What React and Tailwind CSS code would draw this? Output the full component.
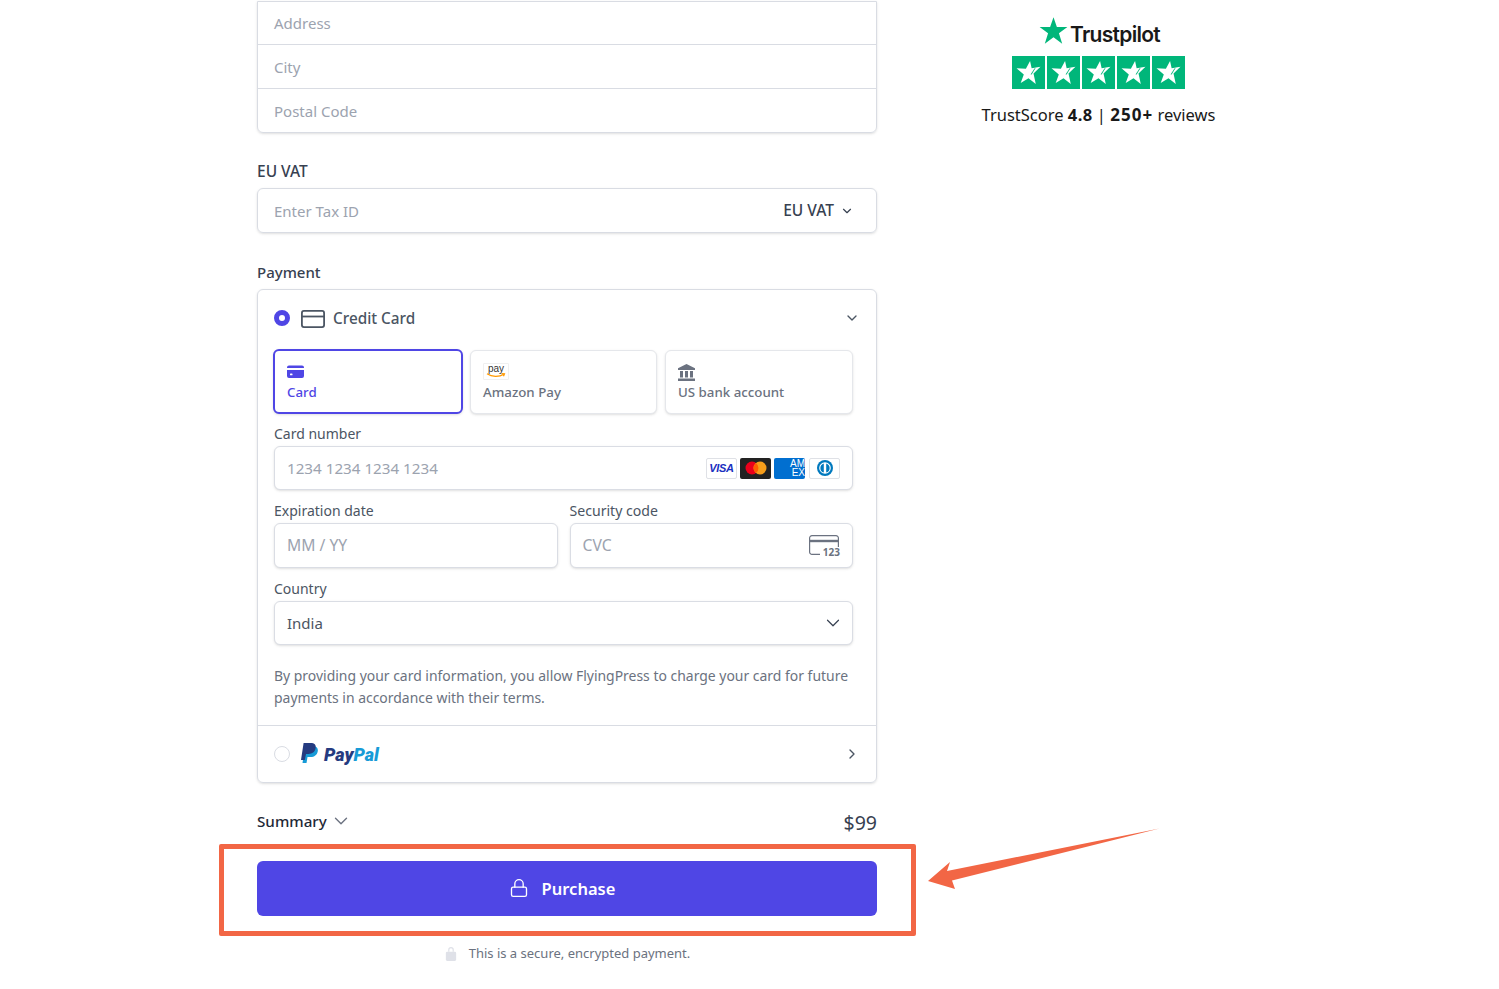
import { ChevronDown, ChevronRight, Lock } from "lucide-react";

const font = { fontFamily: '"Noto Sans", sans-serif' };

const Star = ({ className }) => (
  <svg viewBox="0 0 24 24" className={className}>
    <polygon points="12,1 14.8,9 23.5,9 16.5,14.2 19.2,23 12,17.6 4.8,23 7.5,14.2 0.5,9 9.2,9" fill="currentColor" />
  </svg>
);

const TileStar = () => (
  <svg viewBox="0 0 24 24" className="w-[25px] h-[25px]">
    <polygon points="13.500,1 15,8 23.500,6.500 16.800,13 19,23 12,17.500 4.500,22 7.500,14 0.500,8 9.500,8.500" fill="white" />
    <polygon points="17.500,8.500 19,7.500 15,14 14,14" fill="#00b67a" />
  </svg>
);

const Trustpilot = () => (
  <div className="flex flex-col items-center w-[240px]">
    <div className="flex items-center h-[30px] mt-[15px] ml-[1px]">
      <Star className="w-[29px] h-[29px] text-[#00b67a]" />
      <span className="text-[21px] font-semibold tracking-[-0.7px] text-[#191919] ml-[2px] mt-[9px] font-['Inter']">Trustpilot</span>
    </div>
    <div className="flex gap-[2.5px] mt-[11px] -ml-px">
      {[1, 2, 3, 4, 5].map((i) => (
        <div key={i} className="w-[32.5px] h-[33px] bg-[#00b67a] flex items-center justify-center">
          <TileStar />
        </div>
      ))}
    </div>
    <div className="mt-[13px] text-[16.500px] leading-[26px] text-[#191919] whitespace-nowrap -ml-px">
      TrustScore <b className="font-bold tracking-[0.4px]">4.8</b> | <b className="font-bold text-[17px] tracking-[1px]">250+</b> reviews
    </div>
  </div>
);

const TextRow = ({ label, border, className = "h-[44px] pt-px" }) => (
  <div className={`flex items-center px-4 text-[15px] text-[#9ca3af] ${className} ${border ? "border-t border-[#d9dce3]" : ""}`}>
    {label}
  </div>
);

const Tab = ({ active, icon, label, className }) => (
  <div
    className={`flex flex-col pl-3 bg-white shadow-sm ${className} ${
      active
        ? "h-[65px] -mt-px border-2 border-[#4f46e5] rounded-md text-[#4f46e5] pt-[10px]"
        : "h-[64px] border border-[#e5e7eb] rounded-md text-[#6b7280] pt-[11px]"
    }`}
  >
    <div className="h-[20px] flex items-center">{icon}</div>
    <div className={`text-[13.3px] leading-[20px] font-medium ${active ? "mt-[1px]" : ""}`}>{label}</div>
  </div>
);

const Field = ({ children, className = "" }) => (
  <div className={`h-[44px] border border-[#dadde4] rounded-md shadow-sm flex items-center justify-between pl-3 pr-3 text-[15.2px] bg-white ${className}`}>
    {children}
  </div>
);

const CardBrands = () => (
  <div className="flex gap-[3px]">
    <div className="w-[31px] h-[21px] bg-white border border-[#dfe1e6] rounded-[2px] flex items-center justify-center text-[11px] font-extrabold italic text-[#1a2fc0] font-['Liberation_Sans'] tracking-[-0.3px]">
      VISA
    </div>
    <div className="w-[31px] h-[21px] bg-[#222222] rounded-[2px] flex items-center justify-center">
      <svg viewBox="0 0 22 14" className="w-[22px] h-[14px]">
        <circle cx="7" cy="7" r="6.500" fill="#eb001b" />
        <circle cx="15" cy="7" r="6.500" fill="#f79e1b" />
        <path d="M11 1.900a6.500 6.500 0 0 1 0 10.200a6.500 6.500 0 0 1 0-10.200z" fill="#ff5f00" />
      </svg>
    </div>
    <div className="w-[31px] h-[21px] bg-[#016fd0] rounded-[2px] flex flex-col items-end justify-center overflow-hidden text-white text-[10px] leading-[9px] font-['Liberation_Sans']">
      <span>AM</span>
      <span>EX</span>
    </div>
    <div className="w-[31px] h-[21px] ml-px bg-white border border-[#dfe1e6] rounded-[2px] flex items-center justify-center">
      <svg viewBox="0 0 20 16" className="w-[20px] h-[16px]">
        <circle cx="10" cy="8" r="8" fill="#0079be" />
        <circle cx="10" cy="8" r="5.800" fill="white" />
        <path d="M8.800 3.400v9.200a4.800 4.800 0 0 1 0-9.200zM11.200 3.400a4.800 4.800 0 0 1 0 9.200z" fill="#0079be" />
      </svg>
    </div>
  </div>
);

export default function App() {
  return (
    <div style={font} className="relative w-[1499px] h-[989px] overflow-hidden bg-white flex">
      <div className="w-[620px] ml-[257px] shrink-0 pt-[1px]">
        {/* Address */}
        <div className="border border-[#d9dce3] rounded-b-md shadow-sm h-[132px]">
          <TextRow label="Address" className="h-[42px]" />
          <TextRow label="City" border />
          <TextRow label="Postal Code" border />
        </div>

        {/* VAT */}
        <div className="mt-[26px] text-[15.5px] leading-[24px] font-medium text-[#374151]">EU VAT</div>
        <div className="mt-[5px] h-[45px] border border-[#d9dce3] rounded-md shadow-sm flex items-center justify-between pl-4 pr-[22px]">
          <span className="text-[15px] text-[#9ca3af] mt-px">Enter Tax ID</span>
          <span className="flex items-center gap-[6px] text-[15.500px] font-medium text-[#374151]">
            EU VAT <ChevronDown size={14} strokeWidth={2} />
          </span>
        </div>

        {/* Payment */}
        <div className="mt-[27px] text-[15px] leading-[24px] font-medium text-[#374151]">Payment</div>
        <div className="mt-[5px] border border-[#d9dce3] rounded-md shadow-sm h-[494px]">
          <div className="h-[57px] flex items-center pl-4 pr-[16px]">
            <div className="w-4 h-4 rounded-full border-[5px] border-[#4f46e5] bg-white -mt-px" />
            <svg viewBox="0 0 24 18" className="w-[24px] h-[18px] ml-[11px] text-[#4b5563]" fill="none" stroke="currentColor" strokeWidth="1.8">
              <rect x="0.9" y="0.9" width="22.2" height="16.2" rx="2" />
              <path d="M1 6.500h22" />
            </svg>
            <span className="ml-2 text-[15.300px] font-medium text-[#4b5563]">Credit Card</span>
            <ChevronDown size={16} strokeWidth={2} className="ml-auto text-[#4b5563] -mt-px" />
          </div>

          <div className="pl-4 pr-[23px] mt-[3px]">
            <div className="flex items-start">
              <Tab
                active
                className="w-[190px] -ml-px"
                label="Card"
                icon={
                  <svg viewBox="0 0 17 13" className="w-[17px] h-[13px]">
                    <path d="M0 2.500a2 2 0 0 1 2-2h13a2 2 0 0 1 2 2v.5H0zM0 5h17v6a2 2 0 0 1-2 2H2a2 2 0 0 1-2-2z" fill="#4f46e5" />
                    <rect x="3" y="8.500" width="2.500" height="1.800" rx="0.6" fill="white" />
                  </svg>
                }
              />
              <Tab
                className="w-[187px] ml-[7px]"
                label="Amazon Pay"
                icon={
                  <div className="w-[26px] h-[17px] -mt-[1px] border border-[#f0f0f0] rounded-[1px] flex flex-col items-center relative">
                    <span className="text-[10px] leading-[10px] text-[#333] font-['Liberation_Sans']">pay</span>
                    <svg viewBox="0 0 20 5" className="w-[20px] h-[5px] absolute bottom-[1px]" fill="none" stroke="#f90" strokeWidth="1.2">
                      <path d="M1 .8c5 3.400 12 3.400 17 .4M15.500 .6l3 .2-1 2.400" />
                    </svg>
                  </div>
                }
              />
              <Tab
                className="w-[188px] ml-2"
                label="US bank account"
                icon={
                  <svg viewBox="0 0 17 17" className="w-[17px] h-[17px]" fill="#6b7280">
                    <path d="M8.500 0 17 4.200V6H0V4.200z" />
                    <path d="M2 7h3v6.500H2zM7 7h3v6.500H7zM12 7h3v6.500h-3zM0 14.500h17V17H0z" />
                  </svg>
                }
              />
            </div>

            <div className="mt-[8px] text-sm leading-[24px] text-[#4b5563]">Card number</div>
            <Field>
              <span className="text-[#9ca3af]">1234 1234 1234 1234</span>
              <CardBrands />
            </Field>

            <div className="flex gap-3 mt-[9px]">
              <div className="flex-1">
                <div className="text-sm leading-[24px] text-[#4b5563]">Expiration date</div>
                <Field className="h-[45px]">
                  <span className="text-[#9ca3af] text-[15.700px]">MM / YY</span>
                </Field>
              </div>
              <div className="flex-1">
                <div className="text-[14.1px] leading-[24px] text-[#4b5563]">Security code</div>
                <Field className="h-[45px] pr-[13px]">
                  <span className="text-[#9ca3af] text-[15.700px]">CVC</span>
                  <div className="relative w-[30px] h-[21px]">
                    <svg viewBox="0 0 30 20" className="w-[30px] h-[20px]" fill="none" stroke="#6b7280" strokeWidth="1.2">
                      <path d="M11 19.400H3a2.400 2.400 0 0 1-2.400-2.400V3A2.400 2.400 0 0 1 3 .6h24A2.400 2.400 0 0 1 29.400 3v10" />
                      <path d="M1 6h28" strokeWidth="2.400" />
                    </svg>
                    <span className="absolute -right-px bottom-[-2px] bg-white pl-[1px] text-[10px] leading-[11px] font-bold text-[#6b7280]">123</span>
                  </div>
                </Field>
              </div>
            </div>

            <div className="mt-[9px] text-sm leading-[24px] text-[#4b5563]">Country</div>
            <Field>
              <span className="text-[#4b5563] text-[15px]">India</span>
              <ChevronDown size={22} strokeWidth={1.3} className="text-[#374151] -mr-[4px]" />
            </Field>

            <p className="mt-[20px] text-[13.950px] leading-[22px] text-[#6b7280]">
              By providing your card information, you allow FlyingPress to charge your card for future payments in accordance with their terms.
            </p>
          </div>

          <div className="mt-[16px] border-t border-[#d9dce3] h-[57px] flex items-center pl-4 pr-4">
            <div className="w-4 h-4 rounded-full border border-[#d9dce3] bg-white" />
            <svg viewBox="0 0 17 20" className="w-[17px] h-[20px] ml-[11px] mt-[-2px]">
              <path d="M5.500 20H1.500L4 3h7c3.800 0 6.500 1.600 5.700 5.500-.7 3.600-3.500 5.500-7 5.500H6.500z" fill="#179bd7" />
              <path d="M3.800 17H0L2.600 0h7c3.800 0 5.700 1.800 5 5.300-.7 3.600-3.500 5.700-7 5.700H5z" fill="#253b80" />
            </svg>
            <span className="ml-[6px] text-[18px] font-black italic font-['Roboto']">
              <span className="text-[#253b80]">Pay</span>
              <span className="text-[#179bd7]">Pal</span>
            </span>
            <ChevronRight size={16} strokeWidth={2} className="ml-auto text-[#4b5563]" />
          </div>
        </div>

        {/* Summary */}
        <div className="mt-[27px] flex items-center justify-between h-[26px]">
          <span className="flex items-center gap-[3px] text-[15.200px] font-medium text-[#1f2937] -mt-[3px]">
            Summary <ChevronDown size={22} strokeWidth={1.5} className="text-[#6b7280]" />
          </span>
          <span className="text-[19.500px] text-[#374151]">$99</span>
        </div>

        <button className="mt-[25px] w-full h-[55px] rounded-md bg-[#4f46e5] text-white flex items-center justify-center pr-[10px] text-[16.500px] font-semibold">
          <Lock size={20} strokeWidth={1.6} className="mr-[13px] -mt-[2px]" />
          <span className="mt-px">Purchase</span>
        </button>

        <div className="mt-[27px] pl-[1px] flex items-center justify-center text-[13px] leading-[20px] text-[#6b7280]">
          <svg viewBox="0 0 12 16" className="w-[12px] h-[15px] mr-[12px]" fill="#dfe1e8">
            <path d="M3 6V4a3 3 0 0 1 6 0v2H7.700V4a1.700 1.700 0 0 0-3.400 0v2z" />
            <rect x="0.500" y="6" width="11" height="10" rx="1.500" />
          </svg>
          This is a secure, encrypted payment.
        </div>
      </div>

      <div className="ml-[102px]">
        <Trustpilot />
      </div>

      {/* annotation */}
      <div className="absolute left-[219px] top-[844px] w-[697px] h-[92px] border-[5px] border-[#f26645] rounded-[2px]" />
      <svg className="absolute left-[920px] top-[820px] w-[250px] h-[80px]" viewBox="0 0 250 80">
        <polygon points="239.500,8.500 27,51 30,42 8,61 35,69 32,60.500" fill="#f26645" />
      </svg>
    </div>
  );
}
